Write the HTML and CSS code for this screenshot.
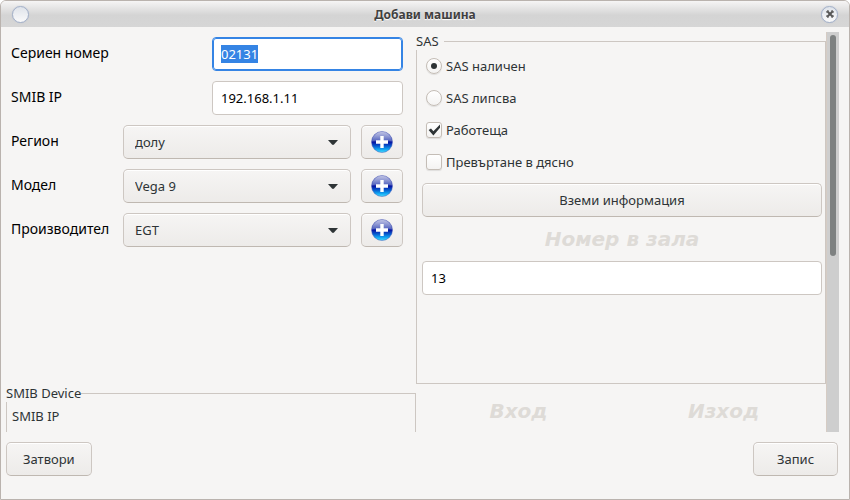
FILE: index.html
```html
<!DOCTYPE html>
<html lang="bg">
<head>
<meta charset="utf-8">
<title>Добави машина</title>
<link rel="stylesheet" href="styles.css">
</head>
<body>
<svg class="defs" aria-hidden="true">
  <defs>
    <linearGradient id="ball" x1="0" y1="0" x2="0" y2="1">
      <stop offset="0" stop-color="#7d84c8"/>
      <stop offset=".45" stop-color="#3548b4"/>
      <stop offset=".5" stop-color="#0510a0"/>
      <stop offset=".68" stop-color="#0757cc"/>
      <stop offset=".85" stop-color="#10a5f2"/>
      <stop offset="1" stop-color="#48e0ff"/>
    </linearGradient>
    <linearGradient id="gloss" x1="0" y1="0" x2="0" y2="1">
      <stop offset="0" stop-color="#fff" stop-opacity=".5"/>
      <stop offset="1" stop-color="#fff" stop-opacity=".12"/>
    </linearGradient>
    <symbol id="plus" viewBox="0 0 22 22">
      <circle cx="11" cy="11" r="10.5" fill="url(#ball)" stroke="#4a5ab8" stroke-opacity=".5"/>
      <path d="M1 10.5a10 9.7 0 0 1 20 0Q11 7 1 10.500z" fill="url(#gloss)"/>
      <path d="M9.300 5h3.400v4.300H17v3.400h-4.300V17H9.300v-4.300H5V9.300h4.300z" fill="#fff"/>
    </symbol>
    <symbol id="arrow" viewBox="0 0 10 5"><path d="M0 0h10L6 4.500q-1 .8-2 0z" fill="#2e3436"/></symbol>
  </defs>
</svg>
<div class="window">
  <header class="titlebar">
    <button class="orb" type="button" aria-label="Меню"></button>
    <h1>Добави машина</h1>
    <button class="orb" type="button" aria-label="Затвори прозореца">
      <svg width="10" height="10" viewBox="0 0 10 10"><path d="M2 2l6 6M8 2L2 8" stroke="#555" stroke-width="2"/><path d="M1 3h2V1M7 1v2h2M1 7h2v2M7 9V7h2" fill="none" stroke="#666"/></svg>
    </button>
  </header>
  <main class="scroller">
    <div class="content">
      <form class="form">
        <div class="row pair"><label for="serial">Сериен номер</label><input class="entry" id="serial" type="text" value="02131"></div>
        <div class="row pair"><label for="ip">SMIB IP</label><input class="entry" id="ip" type="text" value="192.168.1.11"></div>
        <div class="row pick"><label for="region">Регион</label>
          <div class="combo"><select id="region"><option>долу</option></select><svg><use href="#arrow"/></svg></div>
          <button class="btn add" type="button" aria-label="Добави регион"><svg width="22" height="22"><use href="#plus"/></svg></button></div>
        <div class="row pick"><label for="model">Модел</label>
          <div class="combo"><select id="model"><option>Vega 9</option></select><svg><use href="#arrow"/></svg></div>
          <button class="btn add" type="button" aria-label="Добави модел"><svg width="22" height="22"><use href="#plus"/></svg></button></div>
        <div class="row pick"><label for="maker">Производител</label>
          <div class="combo"><select id="maker"><option>EGT</option></select><svg><use href="#arrow"/></svg></div>
          <button class="btn add" type="button" aria-label="Добави производител"><svg width="22" height="22"><use href="#plus"/></svg></button></div>
      </form>
      <fieldset class="frame sas">
        <legend>SAS</legend>
        <div class="stack">
          <label class="choice"><input type="radio" name="sas" checked>SAS наличен</label>
          <label class="choice"><input type="radio" name="sas">SAS липсва</label>
          <label class="choice"><input type="checkbox" checked>Работеща</label>
          <label class="choice"><input type="checkbox">Превъртане в дясно</label>
          <button class="btn" type="button">Вземи информация</button>
          <label class="heading" for="number">Номер в зала</label>
          <input class="entry" id="number" type="text" value="13">
        </div>
      </fieldset>
      <fieldset class="frame device">
        <legend>SMIB Device</legend>
        <div class="caption">SMIB IP</div>
      </fieldset>
      <div class="counters"><h2 class="heading">Вход</h2><h2 class="heading">Изход</h2></div>
    </div>
    <div class="scrollbar"><div class="thumb"></div></div>
  </main>
  <footer class="actions">
    <button class="btn" type="button">Затвори</button>
    <button class="btn" type="button">Запис</button>
  </footer>
</div>
<script src="main.js"></script>
</body>
</html>
```
FILE: styles.css
```css
* { box-sizing: border-box; }

body {
  margin: 0;
  background: #fff;
  color: #2e3436;
  font: 13px/18px "Noto Sans", sans-serif;
}

input, select, button { font: inherit; color: inherit; margin: 0; }

.defs { position: absolute; width: 0; height: 0; }

.window {
  display: flex;
  flex-direction: column;
  height: 100vh;
  border: 1px solid #bab3ae;
  border-radius: 6px 6px 0 0;
  background: #f6f5f4;
  overflow: hidden;
}

.titlebar {
  display: flex;
  flex: none;
  align-items: center;
  height: 26px;
  padding: 0 11px;
  background: linear-gradient(#f6f5f5, #d4d4d4 55%, #d6d6d6);
}
.titlebar h1 {
  flex: 1;
  margin: 0;
  padding-top: 2px;
  font-size: 12px;
  line-height: 18px;
  text-align: center;
  color: #404040;
  text-shadow: 0 1px 1px #fff;
}

.orb {
  display: grid;
  place-items: center;
  width: 17px;
  height: 17px;
  padding: 0;
  border: 1px solid #a3b0c8;
  border-radius: 50%;
  background: linear-gradient(#dfe3ea, #fafafa);
  box-shadow: 0 0 1px #a3b0c8;
}

.scroller {
  display: flex;
  flex: 1;
  min-height: 0;
  margin: 5px 10px 10px 5px;
  overflow: hidden;
}
.content {
  display: grid;
  flex: 1;
  grid-template-columns: 1fr 1fr;
  align-content: start;
}

.form {
  display: flex;
  flex-direction: column;
  gap: 10px;
  padding: 5px 13px 0 5px;
}
.row { display: grid; gap: 10px; }
.row label {
  color: #000;
  font-size: 14px;
  line-height: 32px;
  white-space: nowrap;
}
.pair { grid-template-columns: 1fr 1fr; }
.pick { grid-template-columns: 102px 1fr 42px; }

.entry {
  width: 100%;
  height: 34px;
  padding: 0 8px;
  border: 1px solid #cdc7c2;
  border-radius: 4px;
  background: #fff;
  color: #000;
}
.entry:focus { outline: 1px solid #3584e4; outline-offset: -2px; border-color: #3584e4; }
.entry::selection { background: #3584e4; color: #fff; }

.btn, .combo select {
  height: 34px;
  border: 1px solid #cdc7c2;
  border-bottom-color: #bfb8b1;
  border-radius: 5px;
  background: linear-gradient(#f6f5f4, #edebe9);
  box-shadow: inset 0 1px #fff;
}
.btn { padding: 0 16px; }
.add { display: grid; place-items: center; padding: 0; }

.combo { position: relative; }
.combo select { width: 100%; padding: 0 11px; appearance: none; }
.combo svg { position: absolute; right: 13px; top: 15px; width: 10px; height: 5px; pointer-events: none; }

.frame {
  min-width: 0;
  margin: 0;
  padding: 0 3px 0 5px;
  border: 1px solid #cdc7c2;
}
.frame legend {
  margin-left: -6px;
  padding: 0;
  background: #f6f5f4;
}
.sas { padding-bottom: 88px; }
.sas legend { padding-right: 5px; }
.stack { display: flex; flex-direction: column; }
.choice { display: flex; align-items: center; gap: 4px; height: 32px; padding-left: 4px; }
.choice input {
  display: grid;
  place-items: center;
  width: 16px;
  height: 16px;
  border: 1px solid #c4bdb6;
  border-radius: 3px;
  background: linear-gradient(#fff, #f4f3f2);
  box-shadow: 0 1px 1px #00000018;
  appearance: none;
}
.choice input[type="radio"] { border-radius: 50%; }
.choice input[type="radio"]:checked::before {
  width: 6px;
  height: 6px;
  border-radius: 50%;
  background: #2e3436;
  content: "";
}
.choice input[type="checkbox"]:checked::before {
  width: 12px;
  height: 12px;
  background: #2e3436;
  clip-path: polygon(5% 50%, 25% 38%, 45% 60%, 100% 5%, 100% 32%, 45% 96%);
  content: "";
}
.stack .btn { margin-top: 5px; }

.heading {
  margin: 0;
  color: #dedbd7;
  font: bold italic 20px/44px "DejaVu Sans", sans-serif;
  text-align: center;
}

.caption { padding: 5px 0 60px; }
.counters { display: grid; grid-template-columns: 1fr 1fr; padding-top: 5px; }

.scrollbar {
  width: 13px;
  padding: 3px;
  border-left: 1px solid #d6ccc4;
  background: #cecece;
}
.thumb { width: 6px; height: 56%; border-radius: 3px; background: #7e8181; }

.actions {
  display: flex;
  flex: none;
  justify-content: space-between;
  padding: 0 11px 23px 5px;
}
.actions .btn { min-width: 85px; }
```
FILE: main.js
```js
const serial = document.getElementById("serial");
serial.focus();
serial.select();
```
